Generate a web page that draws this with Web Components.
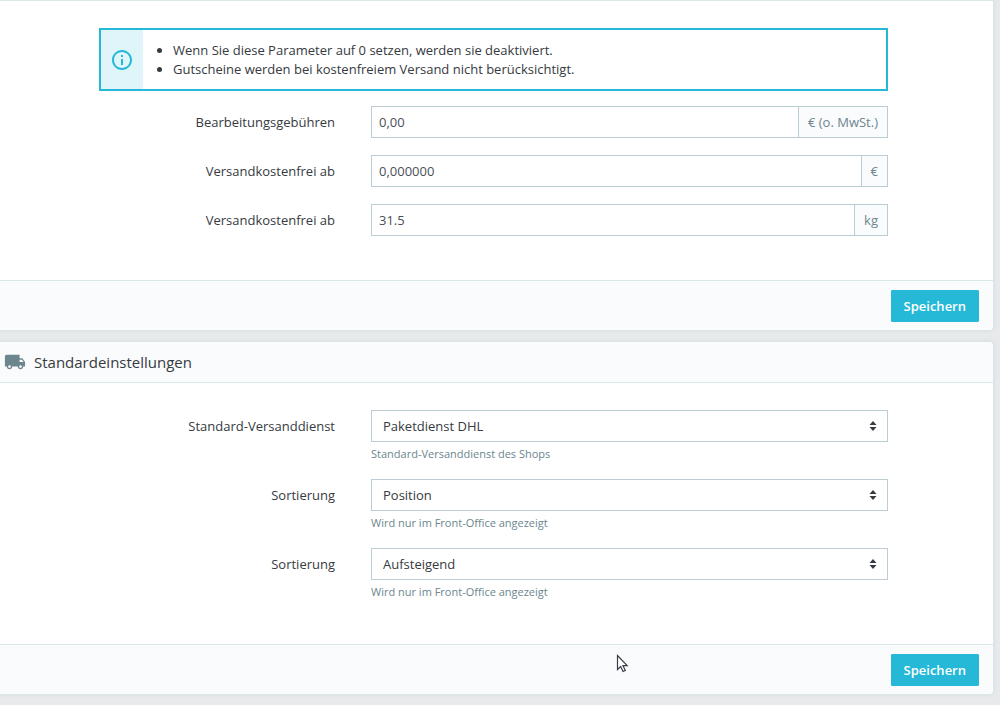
<!DOCTYPE html>
<html lang="de">
<head>
<meta charset="utf-8">
<title>Versand – Voreinstellungen</title>
<style>
  body {
    margin: 0;
    background: #e8e9eb;
    color: #363a41;
    font: 13px/19px "Open Sans", "Noto Sans", sans-serif;
  }
</style>
</head>
<body>
<shipping-page></shipping-page>

<script>
  const define = (name, markup, setup) => {
    const template = document.createElement('template');
    template.innerHTML = markup;
    customElements.define(name, class extends HTMLElement {
      constructor() {
        super();
        this.attachShadow({ mode: 'open' }).append(template.content.cloneNode(true));
      }
      connectedCallback() {
        if (setup) setup(this, this.shadowRoot);
      }
    });
  };

  const rowStyle = `
    * { box-sizing: border-box; }
    :host { display: grid; grid-template-columns: 236px minmax(0, 1fr); column-gap: 36px; }
    label { text-align: right; line-height: 32px; }
    @media (max-width: 700px) {
      :host { grid-template-columns: minmax(0, 1fr); }
      label { text-align: left; }
    }`;

  define('info-alert', `
    <style>
      :host { display: flex; border: 2px solid #25b9d7; background: #fff; }
      .icon { flex: none; width: 42px; display: flex; align-items: center; justify-content: center; background: #dff5f9; }
      svg { display: block; fill: #25b9d7; }
      .text { flex: 1; padding: 11px 16px 10px; }
    </style>
    <div class="icon">
      <svg width="24" height="24" viewBox="0 0 24 24" aria-hidden="true"><path d="M11 17h2v-6h-2v6zm1-15C6.480 2 2 6.480 2 12s4.480 10 10 10 10-4.480 10-10S17.520 2 12 2zm0 18c-4.410 0-8-3.590-8-8s3.590-8 8-8 8 3.590 8 8-3.590 8-8 8zM11 9h2V7h-2v2z"/></svg>
    </div>
    <div class="text"><slot></slot></div>`);

  define('amount-field', `
    <style>${rowStyle}
      .group { display: flex; height: 32px; border: 1px solid #bbcdd2; background: #fff; }
      input { flex: 1; min-width: 0; border: 0; padding: 0 7px; background: none; color: #4a4f57; font: inherit; outline: 0; }
      .unit { flex: none; padding: 0 9px; border-left: 1px solid #bbcdd2; background: #fafbfc; color: #6c868e; line-height: 30px; }
    </style>
    <label for="value"></label>
    <div class="group"><input id="value" type="text"><span class="unit"></span></div>`,
    (host, root) => {
      root.querySelector('label').textContent = host.getAttribute('label');
      root.querySelector('input').value = host.getAttribute('value');
      root.querySelector('.unit').textContent = host.getAttribute('unit');
    });

  define('choice-field', `
    <style>${rowStyle}
      .box { display: grid; align-items: center; }
      select, svg { grid-area: 1 / 1; }
      select { appearance: none; width: 100%; height: 32px; padding: 0 32px 0 11px; border: 1px solid #bbcdd2; border-radius: 0; background: #fff; color: #363a41; font: inherit; outline: 0; }
      svg { justify-self: end; margin-right: 11px; fill: #363a41; pointer-events: none; }
      .help { margin: 3px 0 0; color: #6c868e; font-size: 11px; line-height: 17px; }
    </style>
    <label for="choice"></label>
    <div>
      <div class="box">
        <select id="choice" aria-describedby="help"><option></option></select>
        <svg width="8" height="10" viewBox="0 0 8 10" aria-hidden="true"><path d="M4 0l3.500 4h-7zM.5 6h7L4 10z"/></svg>
      </div>
      <p class="help" id="help"></p>
    </div>`,
    (host, root) => {
      root.querySelector('label').textContent = host.getAttribute('label');
      root.querySelector('option').textContent = host.getAttribute('value');
      root.querySelector('.help').textContent = host.getAttribute('help');
    });

  define('save-button', `
    <style>
      :host { display: block; }
      button { display: block; height: 32px; padding: 0 12px; border: 1px solid #25b9d7; border-radius: 1px; background: #25b9d7; color: #fff; font: inherit; font-weight: 600; cursor: pointer; }
    </style>
    <button type="submit"><slot></slot></button>`);

  define('settings-card', `
    <style>
      :host { display: block; overflow: hidden; border: solid #dbe6e9; border-width: 1px 1px 1px 0; border-radius: 0 5px 5px 0; background: #fff; box-shadow: 0 0 4px rgba(0, 0, 0, .06); }
      :host([continued]) { border-top-right-radius: 0; }
      :host([continued]) header { display: none; }
      header { display: flex; align-items: center; gap: 8px; height: 40px; padding-left: 4px; border-bottom: 1px solid #dbe6e9; background: #fafbfc; }
      svg { display: block; fill: #6c868e; }
      h3 { margin: 0; font-size: 15px; font-weight: 500; line-height: 20px; }
      .body { display: grid; gap: 17px; padding: 27px 105px 44px 99px; }
      footer { display: flex; justify-content: flex-end; padding: 9px 14px 8px; border-top: 1px solid #dbe6e9; background: #fafbfc; }
      @media (max-width: 700px) { .body { padding-inline: 20px; } }
    </style>
    <header>
      <svg width="22" height="22" viewBox="0 0 24 24" aria-hidden="true"><path d="M20 8h-3V4H3c-1.100 0-2 .9-2 2v11h2c0 1.660 1.340 3 3 3s3-1.340 3-3h6c0 1.660 1.340 3 3 3s3-1.340 3-3h2v-5l-3-4zM6 18.500c-.83 0-1.500-.67-1.500-1.500s.67-1.500 1.500-1.500 1.500.67 1.500 1.500-.67 1.500-1.500 1.500zm13.500-9l1.960 2.500H17V9.500h2.500zm-1.500 9c-.83 0-1.500-.67-1.500-1.500s.67-1.500 1.500-1.500 1.500.67 1.500 1.500-.67 1.500-1.500 1.500z"/></svg>
      <h3><slot name="title"></slot></h3>
    </header>
    <div class="body"><slot></slot></div>
    <footer><slot name="action"></slot></footer>`);

  define('mouse-pointer', `
    <style>
      :host { position: absolute; left: 616px; top: 654px; pointer-events: none; }
      svg { display: block; }
    </style>
    <svg width="13" height="20" viewBox="0 0 13 20" aria-hidden="true"><path d="M1.500 1.500v14l3.200-3 2.300 5 2.300-1-2.300-4.800h4.200z" fill="#fff" stroke="#3c3c48" stroke-width="1.200"/></svg>`);

  define('shipping-page', `
    <style>
      :host { display: grid; gap: 10px; padding: 0 6px 10px 0; }
      ul { margin: 0; padding: 0 0 0 14px; }
      info-alert { margin-bottom: -2px; }
    </style>
    <settings-card continued>
      <info-alert>
        <ul>
          <li>Wenn Sie diese Parameter auf 0 setzen, werden sie deaktiviert.</li>
          <li>Gutscheine werden bei kostenfreiem Versand nicht berücksichtigt.</li>
        </ul>
      </info-alert>
      <amount-field label="Bearbeitungsgebühren" value="0,00" unit="€ (o. MwSt.)"></amount-field>
      <amount-field label="Versandkostenfrei ab" value="0,000000" unit="€"></amount-field>
      <amount-field label="Versandkostenfrei ab" value="31.5" unit="kg"></amount-field>
      <save-button slot="action">Speichern</save-button>
    </settings-card>
    <settings-card>
      <span slot="title">Standardeinstellungen</span>
      <choice-field label="Standard-Versanddienst" value="Paketdienst DHL" help="Standard-Versanddienst des Shops"></choice-field>
      <choice-field label="Sortierung" value="Position" help="Wird nur im Front-Office angezeigt"></choice-field>
      <choice-field label="Sortierung" value="Aufsteigend" help="Wird nur im Front-Office angezeigt"></choice-field>
      <save-button slot="action">Speichern</save-button>
    </settings-card>
    <mouse-pointer></mouse-pointer>`);
</script>
</body>
</html>
